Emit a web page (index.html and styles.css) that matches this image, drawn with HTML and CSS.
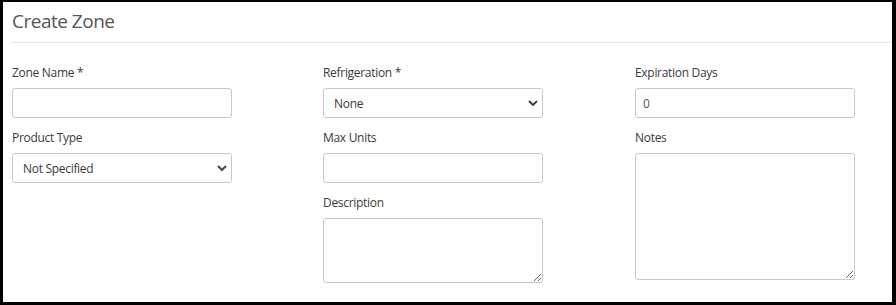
FILE: index.html
```html
<!DOCTYPE html>
<html lang="en">
<head>
    <meta charset="UTF-8">
    <meta name="viewport" content="width=device-width, initial-scale=1.0">
    <title>Create Zone</title>
    <link rel="stylesheet" href="styles.css">
</head>
<body>
    <div class="panel">
        <h1 class="panel-title">Create Zone</h1>
        <form class="zone-form">
            <div class="form-col">
                <div class="form-group">
                    <label for="zone-name">Zone Name *</label>
                    <input type="text" id="zone-name" class="form-control">
                </div>
                <div class="form-group">
                    <label for="product-type">Product Type</label>
                    <div class="select-wrap">
                        <select id="product-type" class="form-control">
                            <option>Not Specified</option>
                        </select>
                        <svg class="select-arrow" width="10" height="6" viewBox="0 0 10 6"><path d="M1 1l4 4 4-4" fill="none" stroke="#444" stroke-width="2"/></svg>
                    </div>
                </div>
            </div>

            <div class="form-col">
                <div class="form-group">
                    <label for="refrigeration">Refrigeration *</label>
                    <div class="select-wrap">
                        <select id="refrigeration" class="form-control">
                            <option>None</option>
                        </select>
                        <svg class="select-arrow" width="10" height="6" viewBox="0 0 10 6"><path d="M1 1l4 4 4-4" fill="none" stroke="#444" stroke-width="2"/></svg>
                    </div>
                </div>
                <div class="form-group">
                    <label for="max-units">Max Units</label>
                    <input type="text" id="max-units" class="form-control">
                </div>
                <div class="form-group">
                    <label for="description">Description</label>
                    <textarea id="description" class="form-control desc"></textarea>
                </div>
            </div>

            <div class="form-col">
                <div class="form-group">
                    <label for="expiration">Expiration Days</label>
                    <input type="text" id="expiration" class="form-control" value="0">
                </div>
                <div class="form-group">
                    <label for="notes">Notes</label>
                    <textarea id="notes" class="form-control notes"></textarea>
                </div>
            </div>
        </form>
    </div>
</body>
</html>
```

FILE: styles.css
```css
html, body {
    height: 100%;
}
body {
    margin: 0;
    padding: 2px 4px 3px 3px;
    box-sizing: border-box;
    background: #000;
    font-family: "Open Sans", Arial, sans-serif;
}
.panel {
    height: 100%;
    background: #fff;
}
.panel-title {
    margin: 0 0 0 9px;
    padding: 8px 0 10px;
    font-size: 19px;
    line-height: 22px;
    letter-spacing: -0.5px;
    font-weight: normal;
    color: #555;
    border-bottom: 1px solid #e5e5e5;
}
.zone-form {
    display: grid;
    grid-template-columns: 311px 312px 220px;
    padding: 21px 0 0 9px;
}
.form-group {
    margin-bottom: 11px;
}
.form-group label {
    display: block;
    font-size: 12px;
    line-height: 17px;
    letter-spacing: -0.3px;
    color: #3a3a3a;
    margin-bottom: 7px;
}
.form-control {
    display: block;
    width: 220px;
    height: 30px;
    box-sizing: border-box;
    margin: 0;
    padding: 0 7px;
    font-family: "Open Sans", Arial, sans-serif;
    font-size: 12px;
    letter-spacing: -0.3px;
    color: #555;
    background: #fff;
    border: 1px solid #c8c8c8;
    border-radius: 3px;
    outline: none;
}
.select-wrap {
    position: relative;
    width: 220px;
}
select.form-control {
    appearance: none;
    -webkit-appearance: none;
    padding-left: 10px;
    color: #3a3a3a;
}
.select-arrow {
    position: absolute;
    right: 5px;
    top: 12px;
    pointer-events: none;
}
textarea.form-control {
    padding: 6px 7px;
}
.desc {
    height: 65px;
}
.notes {
    height: 127px;
}
```
